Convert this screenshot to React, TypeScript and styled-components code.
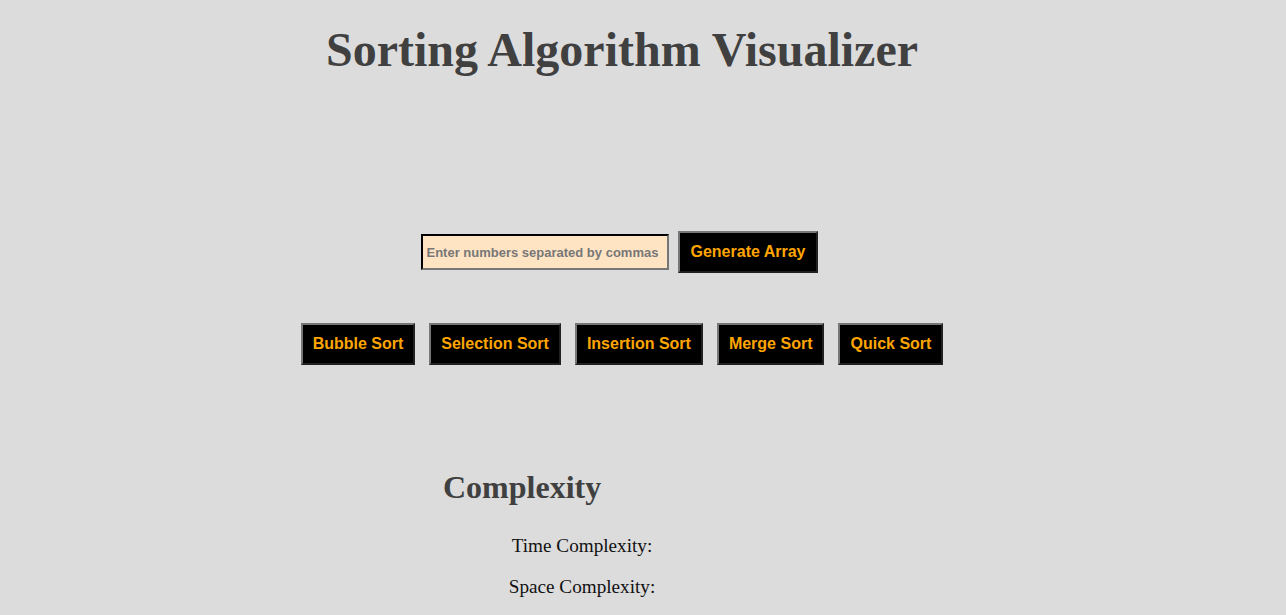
import React, { useState } from "react"
import styled, { createGlobalStyle } from "styled-components"

const GlobalStyle = createGlobalStyle`
  body {
    margin: 0;
    background-color: #dcdcdc;
    font-family: "Liberation Serif", "Times New Roman", serif;
  }
`

const algorithms = ["Bubble Sort", "Selection Sort", "Insertion Sort", "Merge Sort", "Quick Sort"]

const Page = styled.div`
  width: 1244px;
  text-align: center;
  padding-top: 1px;
`

const Title = styled.h1`
  font-size: 48px;
  font-weight: bold;
  color: #404040;
  margin: 20px 0 0;
  line-height: 58px;
`

const Controls = styled.div`
  margin-top: 152px;
  padding-right: 5px;
  display: flex;
  justify-content: center;
  align-items: center;
  gap: 9px;
`

const NumberInput = styled.input`
  box-sizing: border-box;
  height: 36px;
  width: 248px;
  padding: 0 3px;
  background-color: #ffe4c4;
  border: 2px inset #767676;
  border-top-color: #333;
  border-left-color: #333;
  font-family: "Liberation Sans", Arial, sans-serif;
  font-weight: bold;
  font-size: 13px;
  color: #333;

  &::placeholder {
    color: #777;
  }
`

const ActionButton = styled.button`
  background-color: #000;
  color: #ffa500;
  font-family: "Liberation Sans", Arial, sans-serif;
  font-weight: bold;
  font-size: 16px;
  line-height: 18px;
  padding: 10px;
  border: 2px outset #767676;
  cursor: pointer;
`

const SortRow = styled.div`
  margin-top: 50px;
  display: flex;
  justify-content: center;
  gap: 14px;
`

const Complexity = styled.section`
  margin: 104px 0 0 443px;
  width: 278px;
  text-align: left;
`

const ComplexityTitle = styled.h2`
  font-size: 32px;
  color: #404040;
  margin: 0;
  line-height: 37px;
`

const ComplexityLine = styled.p`
  text-align: center;
  font-size: 19.2px;
  line-height: 22px;
  margin: 19px 0 0;
  color: #111;

  &:first-of-type {
    margin-top: 29px;
  }
`

export default function App() {
  const [input, setInput] = useState("")

  return (
    <Page>
      <GlobalStyle />
      <Title>Sorting Algorithm Visualizer</Title>
      <Controls>
        <NumberInput
          value={ input }
          onChange={ e => setInput(e.target.value) }
          placeholder="Enter numbers separated by commas"
        />
        <ActionButton>Generate Array</ActionButton>
      </Controls>
      <SortRow>
        { algorithms.map(name => <ActionButton key={ name }>{ name }</ActionButton>) }
      </SortRow>
      <Complexity>
        <ComplexityTitle>Complexity</ComplexityTitle>
        <ComplexityLine>Time Complexity:</ComplexityLine>
        <ComplexityLine>Space Complexity:</ComplexityLine>
      </Complexity>
    </Page>
  )
}
